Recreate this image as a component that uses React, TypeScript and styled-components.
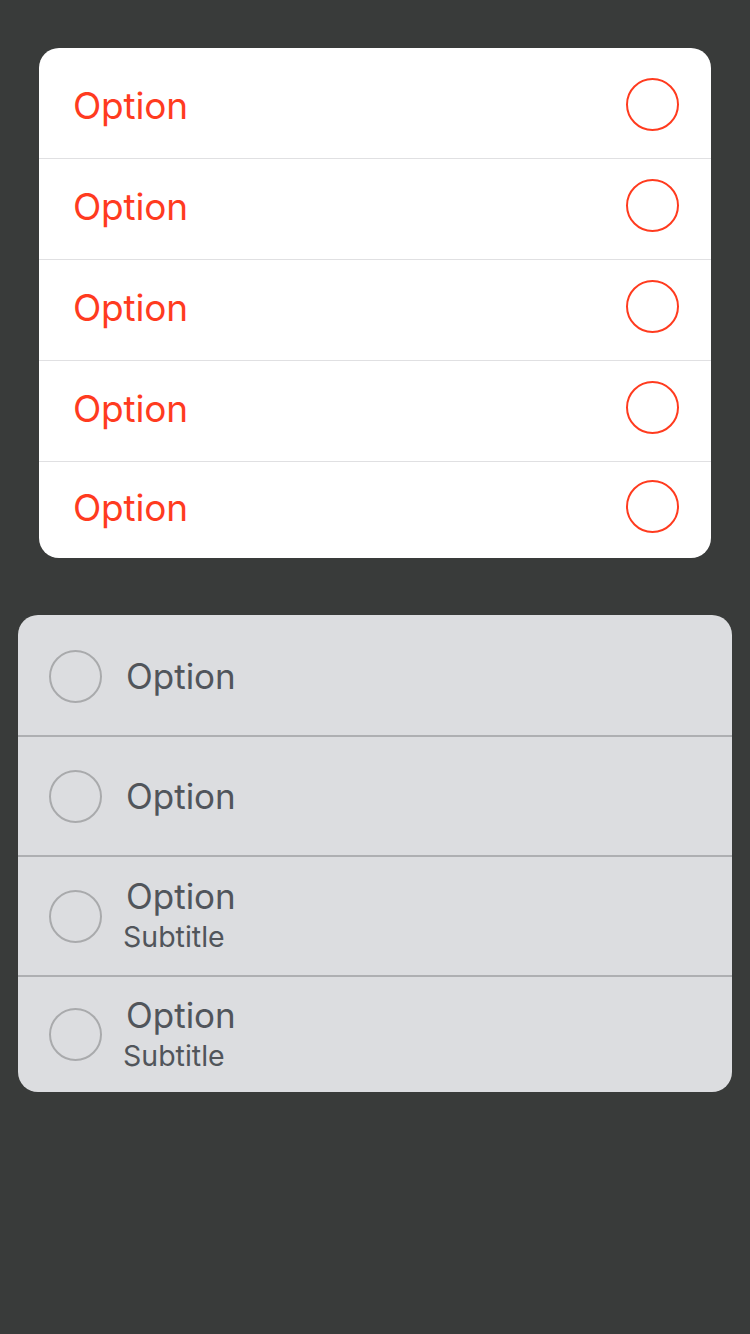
import React from "react";
import styled, { createGlobalStyle } from "styled-components";

const Global = createGlobalStyle`
  html, body { margin: 0; padding: 0; background: #393b3a; }
  body { font-family: Inter, "Noto Sans", sans-serif; }
`;

const Page = styled.div`
  width: 750px;
  min-height: 1334px;
  background: #393b3a;
  display: flex;
  flex-direction: column;
  box-sizing: border-box;
  padding-top: 48px;
`;

const RedCard = styled.div`
  margin: 0 39px;
  background: #ffffff;
  border-radius: 20px;
  padding-top: 10px;
  display: flex;
  flex-direction: column;
  overflow: hidden;
`;

const RedRow = styled.div<{ $last?: boolean }>`
  height: ${(p) => (p.$last ? 96 : 100)}px;
  box-sizing: content-box;
  display: flex;
  align-items: center;
  justify-content: space-between;
  padding: 0 32px 0 34px;
  border-bottom: ${(p) => (p.$last ? "none" : "1px solid #e0e0e2")};
`;

const RedLabel = styled.span`
  color: #ff3b1f;
  font-size: 37px;
  letter-spacing: -0.2px;
  margin-bottom: 6px;
`;

const Ring = styled.span<{ $color: string; $lift?: number }>`
  width: 53px;
  height: 53px;
  box-sizing: border-box;
  border-radius: 50%;
  border: 2px solid ${(p) => p.$color};
  flex: none;
  margin-bottom: ${(p) => p.$lift ?? 0}px;
`;

const GreyCard = styled.div`
  margin: 57px 18px 0;
  padding-top: 2px;
  background: #dcdde0;
  border-radius: 20px;
  display: flex;
  flex-direction: column;
  overflow: hidden;
`;

const GreyRow = styled.div<{ $last?: boolean }>`
  height: ${(p) => (p.$last ? 115 : 118)}px;
  display: flex;
  align-items: center;
  gap: 24px;
  padding: 0 31px;
  border-bottom: ${(p) => (p.$last ? "none" : "2px solid #aeafb2")};
`;

const TextCol = styled.div`
  display: flex;
  flex-direction: column;
  color: #51555b;
`;

const Title = styled.span`
  font-size: 35px;
  line-height: 42px;
`;

const Subtitle = styled.span`
  font-size: 28.5px;
  line-height: 40px;
  margin-left: -3px;
`;

export default function App() {
  const red = [0, 1, 2, 3, 4];
  const grey = [{ sub: false }, { sub: false }, { sub: true }, { sub: true }];
  return (
    <Page>
      <Global />
      <RedCard>
        {red.map((i) => (
          <RedRow key={i} $last={i === red.length - 1}>
            <RedLabel>Option</RedLabel>
            <Ring $color="#ff3b1f" $lift={7} />
          </RedRow>
        ))}
      </RedCard>
      <GreyCard>
        {grey.map((g, i) => (
          <GreyRow key={i} $last={i === grey.length - 1}>
            <Ring $color="#a9aaac" />
            <TextCol>
              <Title>Option</Title>
              {g.sub && <Subtitle>Subtitle</Subtitle>}
            </TextCol>
          </GreyRow>
        ))}
      </GreyCard>
    </Page>
  );
}
